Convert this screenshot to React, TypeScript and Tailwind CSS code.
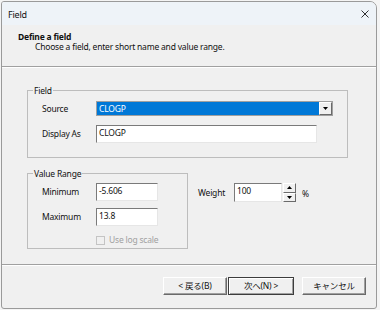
import React from "react";

const font = "font-['Noto_Sans','Noto_Sans_CJK_JP',sans-serif]";

function TextBox({ value, className }: { value: string; className: string }) {
  return (
    <div
      className={`bg-white border border-t-[#7a7a7a] border-l-[#7a7a7a] border-r-[#e6e6e6] border-b-[#e6e6e6] pl-[2px] pt-px leading-[11px] ${className}`}
    >
      {value}
    </div>
  );
}

function Button({ label, primary }: { label: string; primary?: boolean }) {
  return (
    <div
      className={`h-[18px] flex items-center justify-center bg-[#f0f0f0] ${
        primary
          ? "w-[66px] border border-[#3c3c3c] shadow-[inset_1px_1px_0_#ffffff,inset_-1px_-1px_0_#a0a0a0]"
          : "w-[64px] border border-t-white border-l-white border-r-[#6a6a6a] border-b-[#6a6a6a] shadow-[inset_-1px_-1px_0_#a0a0a0]"
      }`}
    >
      {label}
    </div>
  );
}

export default function App() {
  return (
    <div className={`w-[380px] h-[310px] bg-[#f4f4f4] pt-px pl-px text-[8.5px] tracking-[-0.2px] text-[#111] ${font}`}>
      <div className="w-[376px] h-[308px] border border-[#9a9a9a] rounded-tr-[7px] rounded-tl-[3px] rounded-b-[3px] overflow-hidden bg-[#f0f0f0] flex flex-col">
        {/* Title bar */}
        <div className="h-[23px] shrink-0 bg-[#eef3f8] flex items-center justify-between pl-[6px] pr-[6px]">
          <span className="text-[9px] leading-none mt-px">Field</span>
          <svg width="8" height="8" viewBox="0 0 8 8" className="mr-[1px]">
            <path d="M0.5 0.5 L7.5 7.5 M7.5 0.5 L0.5 7.5" stroke="#1a1a1a" strokeWidth="0.9" />
          </svg>
        </div>

        {/* Header */}
        <div className="h-[41px] shrink-0 pl-[16px] pt-[7px] leading-[10px]">
          <div className="font-bold">Define a field</div>
          <div className="pl-[17px]">Choose a field, enter short name and value range.</div>
        </div>
        <div className="h-px bg-[#a0a0a0] shrink-0" />
        <div className="h-px bg-white shrink-0" />

        {/* Body */}
        <div className="h-[196px] shrink-0 pl-[25px]">
          <div className="relative mt-[22px] w-[321px] h-[68px] border border-[#bdbdbd] pl-[14px] pt-[10px]">
            <span className="absolute -top-[6px] left-[5px] px-px bg-[#f0f0f0] leading-[11px]">Field</span>
            <div className="flex items-center h-[15px]">
              <span className="w-[54px] mt-[2px]">Source</span>
              <div className="w-[237px] h-[15px] flex border border-[#a0a0a0] bg-white">
                <div className="flex-1 bg-[#0078d7] text-white pl-[2px] leading-[13px]">CLOGP</div>
                <div className="w-[13px] h-full bg-[#f0f0f0] border border-t-white border-l-white border-r-[#6a6a6a] border-b-[#6a6a6a] flex items-center justify-center">
                  <svg width="5" height="3" viewBox="0 0 5 3">
                    <path d="M0 0 L5 0 L2.5 3 Z" fill="#000" />
                  </svg>
                </div>
              </div>
            </div>
            <div className="flex items-center mt-[9px]">
              <span className="w-[54px]">Display As</span>
              <TextBox value="CLOGP" className="w-[221px] h-[18px]" />
            </div>
          </div>

          <div className="flex mt-[15px]">
            <div className="relative w-[161px] h-[76px] border border-[#bdbdbd] pl-[14px] pt-[9px]">
              <span className="absolute -top-[6px] left-[5px] px-px bg-[#f0f0f0] leading-[11px]">Value Range</span>
              <div className="flex items-center">
                <span className="w-[54px]">Minimum</span>
                <TextBox value="-5.606" className="w-[62px] h-[18px]" />
              </div>
              <div className="flex items-center mt-[7px]">
                <span className="w-[54px]">Maximum</span>
                <TextBox value="13.8" className="w-[62px] h-[18px]" />
              </div>
              <div className="flex items-center mt-[10px] ml-[54px] text-[#a0a0a0]">
                <div className="w-[9px] h-[9px] border border-[#c4c4c4] bg-[#f0f0f0]" />
                <span className="ml-[4px] leading-none">Use log scale</span>
              </div>
            </div>

            <div className="flex items-start ml-[10px] pt-[10px]">
              <span className="w-[36px] mt-[4px]">Weight</span>
              <TextBox value="100" className="w-[48px] h-[19px]" />
              <div className="ml-px w-[13px] h-[19px] flex flex-col">
                <div className="flex-1 bg-[#f0f0f0] border border-t-white border-l-white border-r-[#6a6a6a] border-b-[#6a6a6a] flex items-center justify-center">
                  <svg width="5" height="3" viewBox="0 0 5 3">
                    <path d="M0 3 L5 3 L2.5 0 Z" fill="#000" />
                  </svg>
                </div>
                <div className="flex-1 bg-[#f0f0f0] border border-t-white border-l-white border-r-[#6a6a6a] border-b-[#6a6a6a] flex items-center justify-center">
                  <svg width="5" height="3" viewBox="0 0 5 3">
                    <path d="M0 0 L5 0 L2.5 3 Z" fill="#000" />
                  </svg>
                </div>
              </div>
              <span className="ml-[6px] mt-[5px]">%</span>
            </div>
          </div>
        </div>

        <div className="h-px bg-[#a0a0a0] shrink-0" />
        <div className="h-px bg-white shrink-0" />

        {/* Footer buttons */}
        <div className="flex-1 flex items-start justify-end pt-[11px] pr-[10px]">
          <Button label="< 戻る(B)" />
          <div className="ml-px">
            <Button label="次へ(N) >" primary />
          </div>
          <div className="ml-[8px]">
            <Button label="キャンセル" />
          </div>
        </div>
      </div>
    </div>
  );
}
